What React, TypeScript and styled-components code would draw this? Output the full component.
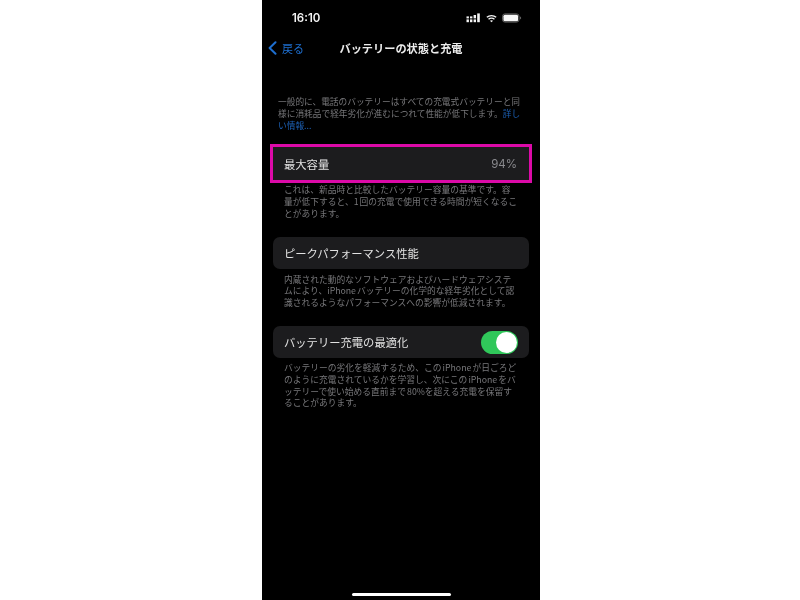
import React from 'react';
import styled, { createGlobalStyle } from 'styled-components';

const GlobalStyle = createGlobalStyle`
	html, body {
		margin: 0;
		padding: 0;
		background: #fff;
	}
	body {
		font-family: "Noto Sans CJK JP", "Inter", "Liberation Sans", sans-serif;
	}
`;

const Page = styled.div`
	width: 800px;
	height: 600px;
	display: flex;
	justify-content: flex-start;
	padding-left: 262px;
	box-sizing: border-box;
	overflow: hidden;
`;

const Phone = styled.div`
	width: 278px;
	height: 600px;
	background: #000;
	display: flex;
	flex-direction: column;
	filter: blur(0.45px);
`;

const StatusBar = styled.div`
	height: 36px;
	padding: 0 18px 0 30px;
	display: flex;
	align-items: center;
	justify-content: space-between;
	color: #f4f4f4;
`;

const Time = styled.span`
	font-family: "Inter", "Liberation Sans", sans-serif;
	font-size: 11.5px;
	font-weight: 600;
`;

const StatusIcons = styled.div`
	display: flex;
	align-items: center;
	gap: 5px;
`;

const NavBar = styled.div`
	position: relative;
	height: 24px;
	display: flex;
	align-items: center;
	justify-content: center;
`;

const Back = styled.div`
	position: absolute;
	left: 6px;
	top: 0;
	height: 24px;
	display: flex;
	align-items: center;
	gap: 5px;
	color: #1e6fd0;
	font-size: 11px;
`;

const Title = styled.div`
	color: #ececec;
	font-size: 11.2px;
	font-weight: 600;
`;

const Content = styled.div`
	flex: 1;
	padding: 36px 11px 0;
	display: flex;
	flex-direction: column;
`;

const Caption = styled.p<{ $top?: number; $wide?: boolean }>`
	margin: ${({ $top }) => $top ?? 0}px 0 0;
	padding: ${({ $wide }) => ($wide ? '0 7px 0 5px' : '0 10px 0 11px')};
	font-size: ${({ $wide }) => ($wide ? '8.7px' : '8.75px')};
	line-height: ${({ $wide }) => ($wide ? '12.1px' : '11.8px')};
	color: #77777a;
	text-autospace: normal;
`;

const MoreLink = styled.span`
	color: #1d62b8;
`;

const Card = styled.div<{ $highlight?: boolean; $top?: number }>`
	height: ${({ $highlight }) => ($highlight ? '33px' : '32px')};
	margin-top: ${({ $top }) => $top ?? 0}px;
	padding: 0 11px;
	display: flex;
	align-items: center;
	justify-content: space-between;
	background: #1c1c1e;
	border-radius: ${({ $highlight }) => ($highlight ? '0' : '7px')};
	color: #e2e2e2;
	font-size: 11.3px;
	box-sizing: border-box;
	flex-shrink: 0;
	${({ $highlight }) => $highlight && 'outline: 3px solid #dc0aa8;'}
`;

const Value = styled.span`
	color: #8a8a8e;
	font-family: "Inter", "Liberation Sans", sans-serif;
	font-size: 11.5px;
	margin-right: 1px;
`;

const Toggle = styled.div`
	width: 37px;
	height: 23px;
	border-radius: 12px;
	background: #30c75a;
	display: flex;
	align-items: center;
	justify-content: flex-end;
	padding: 0 1px;
	box-sizing: border-box;
`;

const Knob = styled.div`
	width: 21px;
	height: 21px;
	border-radius: 50%;
	background: #fff;
`;

const HomeBar = styled.div`
	width: 99px;
	height: 3.5px;
	border-radius: 2px;
	background: #fff;
	margin: 0 auto 4px;
`;

const SignalIcon = () => (
	<svg width="15" height="10" viewBox="0 0 15 10" fill="#f4f4f4">
		<rect x="0.5" y="6.4" width="2.4" height="2.8" />
		<rect x="0.5" y="3.4" width="2.4" height="2" />
		<rect x="4" y="6.4" width="2.4" height="2.8" />
		<rect x="4" y="3.4" width="2.4" height="2" />
		<rect x="7.6" y="6.4" width="2.4" height="2.8" />
		<rect x="7.6" y="2" width="2.4" height="3.4" />
		<rect x="11.2" y="0.4" width="2.6" height="8.8" />
	</svg>
);

const WifiIcon = () => (
	<svg width="11" height="9" viewBox="0 0 13 10" fill="none" stroke="#f4f4f4" strokeWidth="1.6">
		<path d="M1 3.6C4 .9 9 .9 12 3.6" />
		<path d="M3 5.8C4.9 4.2 8.1 4.2 10 5.8" />
		<path d="M6.5 9.4 4.6 7.6C5.8 6.7 7.2 6.7 8.4 7.6Z" fill="#f4f4f4" stroke="none" />
	</svg>
);

const BatteryIcon = () => (
	<svg width="20" height="10" viewBox="0 0 20 10">
		<rect x="0.5" y="0.9" width="16.5" height="8.2" rx="2.4" fill="none" stroke="#777" strokeWidth="0.8" />
		<rect x="1.4" y="1.8" width="14.7" height="6.4" rx="1.5" fill="#f6f6f6" />
		<path d="M18 3.6c.8.3 1.1.9 1.1 1.4s-.3 1.1-1.1 1.4Z" fill="#666" />
	</svg>
);

const Chevron = () => (
	<svg width="9" height="14" viewBox="0 0 9 14" fill="none" stroke="#1e6fd0" strokeWidth="2" strokeLinecap="round" strokeLinejoin="round">
		<path d="M7.5 1.2 1.6 7l5.9 5.8" />
	</svg>
);

export default function App() {
	return (
		<>
			<GlobalStyle />
			<Page>
				<Phone>
					<StatusBar>
						<Time>16:10</Time>
						<StatusIcons>
							<SignalIcon />
							<WifiIcon />
							<BatteryIcon />
						</StatusIcons>
					</StatusBar>
					<NavBar>
						<Back>
							<Chevron />
							戻る
						</Back>
						<Title>バッテリーの状態と充電</Title>
					</NavBar>
					<Content>
						<Caption $wide>
							一般的に、電話のバッテリーはすべての充電式バッテリーと同様に消耗品で経年劣化が進むにつれて性能が低下します。<MoreLink>詳しい情報...</MoreLink>
						</Caption>
						<Card $highlight $top={15}>
							最大容量
							<Value>94%</Value>
						</Card>
						<Caption $top={4}>
							これは、新品時と比較したバッテリー容量の基準です。容量が低下すると、1回の充電で使用できる時間が短くなることがあります。
						</Caption>
						<Card $top={17}>ピークパフォーマンス性能</Card>
						<Caption $top={5}>
							内蔵された動的なソフトウェアおよびハードウェアシステムにより、iPhoneバッテリーの化学的な経年劣化として認識されるようなパフォーマンスへの影響が低減されます。
						</Caption>
						<Card $top={17}>
							バッテリー充電の最適化
							<Toggle>
								<Knob />
							</Toggle>
						</Card>
						<Caption $top={4}>
							バッテリーの劣化を軽減するため、このiPhoneが日ごろどのように充電されているかを学習し、次にこのiPhoneをバッテリーで使い始める直前まで80%を超える充電を保留することがあります。
						</Caption>
					</Content>
					<HomeBar />
				</Phone>
			</Page>
		</>
	);
}
